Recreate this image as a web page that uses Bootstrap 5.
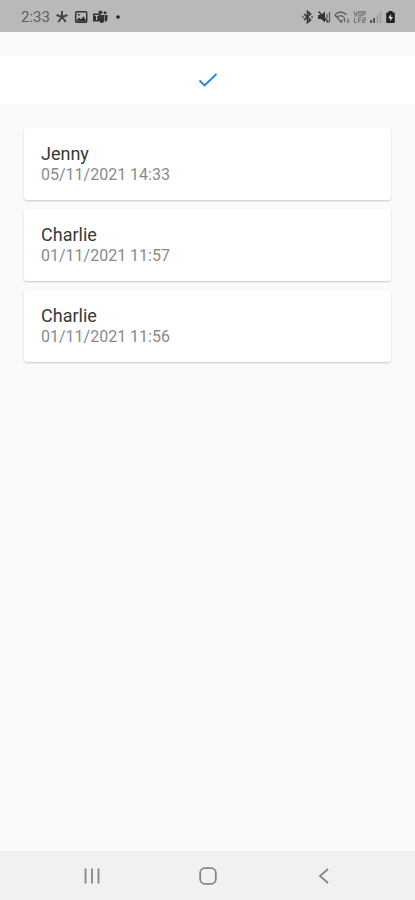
<!DOCTYPE html>
<html lang="en">
<head>
<meta charset="utf-8">
<meta name="viewport" content="width=device-width, initial-scale=1">
<title>Messages</title>
<link href="https://cdn.jsdelivr.net/npm/bootstrap@5.3.0/dist/css/bootstrap.min.css" rel="stylesheet">
<style>
body { background: #fafafa; font-family: Roboto, "Liberation Sans", sans-serif; }
.status-bar { height: 32px; background: #b9b9b9; color: #5e5e5e; font-size: 15px; line-height: 20px; padding: 1px 19px 0 21px; }
.status-bar svg { display: block; }
.status-left { gap: 4px; }
.status-right { gap: 3px; }
.confirm-bar { height: 48px; background: #fff; }
.confirm-btn { color: #2483e0; line-height: 0; }
.entries { gap: 9px; padding: 24px; }
.entry { border: 0; border-radius: 3px; padding: 15px 17px; line-height: 21px; box-shadow: 0 1px 2px rgba(0,0,0,.2); }
.entry-name { font-size: 18px; line-height: 21px; color: #383838; }
.entry-time { font-size: 16px; color: #8a8a8a; }
.system-nav { height: 49px; background: #f1f1f1; padding: 0 34px; color: #858585; }
.system-nav .btn { color: inherit; line-height: 0; }
</style>
</head>
<body class="d-flex flex-column min-vh-100">
<header class="status-bar d-flex align-items-center justify-content-between">
  <div class="status-left d-flex align-items-center">
    <time class="text-nowrap">2:33</time>
    <svg width="16" height="14" viewBox="-1 0 16 14" fill="none" stroke="#444" stroke-width="2" aria-hidden="true"><path d="M7 7V1M7 7l5.500-2M7 7l3.800 5M7 7l-3.800 5M7 7L1.500 5"/></svg>
    <svg width="14" height="14" viewBox="0 0 14 14" aria-hidden="true"><rect x="1.700" y="1.700" width="11" height="10.600" rx="1" fill="none" stroke="#333" stroke-width="1.500"/><path d="M2.500 10.500L5 7.500l2 1.700 2.500-3 2.500 4.300v1H2.500z" fill="#333"/><circle cx="4.800" cy="4.800" r="1" fill="#333"/></svg>
    <svg width="16" height="14" viewBox="0 0 16 14" fill="#333" aria-hidden="true"><circle cx="8.500" cy="2.300" r="1.900"/><circle cx="13" cy="2.800" r="1.500"/><path d="M8 5h4v6.500a3 3 0 0 1-4 1zM12.600 5h2.900v4.500a2 2 0 0 1-2.900 1.700z"/><path d="M1 3.500h7v8H1z"/><path d="M2.600 5.500h4M4.600 5.500v4.500" stroke="#b9b9b9" stroke-width="1.200"/></svg>
    <svg width="12" height="14" viewBox="0 0 12 14" aria-hidden="true"><circle cx="6" cy="7" r="1.800" fill="#222"/></svg>
  </div>
  <div class="status-right d-flex align-items-center">
    <svg width="13" height="14" viewBox="0 0 13 14" fill="none" stroke="#333" stroke-width="1.600" aria-hidden="true"><path d="M3 4l6.500 6L6.500 12.500v-11L9.500 4 3 10"/><path d="M1.500 7h1.200M10.300 7h1.500"/></svg>
    <svg width="14" height="14" viewBox="0 0 14 14" aria-hidden="true"><path d="M1 5h3l4-3.500v11L4 9H1z" fill="#333"/><path d="M1.500 1.500l10 11" stroke="#333" stroke-width="1.500"/><path d="M10 4v5M12.500 2v10" stroke="#555" stroke-width="1.200"/></svg>
    <svg width="16" height="14" viewBox="0 0 16 14" fill="none" stroke="#626262" stroke-width="1.500" aria-hidden="true"><path d="M.8 4.800Q6.500-.5 12.500 4.800M3 7.200q3.500-3 7 0M.8 4.800L7 12l1.500-2"/><path d="M10.500 12V8M9.300 9.200L10.500 8l1.200 1.200M14 8.500v4M12.800 11.300l1.200 1.200 1.200-1.200" stroke-width="1"/></svg>
    <svg width="13" height="14" viewBox="0 0 13 14" fill="none" stroke="#777" stroke-width="1.200" aria-hidden="true"><path d="M1 1.500l1.700 4.500L4.500 1.500M5.700 1.500h2.500V6H5.700zM10 6V1.500h2.200V4H10M1.500 8v4.500H4M5.500 12.500V8h3M5.500 10.300h2.300M9.500 8h2.700v2.200H9.700v2.300h2.700"/></svg>
    <svg width="13" height="14" viewBox="0 0 13 14" aria-hidden="true"><path d="M1 10h2v3H1zM4 8h2v5H4z" fill="#555"/><path d="M7.500 5h1.700v8H7.500zM10.700 2h1.500v11h-1.500z" fill="#999"/></svg>
    <svg width="11" height="14" viewBox="0 0 11 14" aria-hidden="true"><path d="M3.500 1h4v1.500H9a.8.800 0 0 1 .8.800v9a.8.800 0 0 1-.8.800H2a.8.800 0 0 1-.8-.8v-9A.8.800 0 0 1 2 2.500h1.500z" fill="#222"/><path d="M6 4L3.200 8.300h2v3L8 7H6z" fill="#ddd"/></svg>
  </div>
</header>
<main class="flex-grow-1 pt-4">
  <div class="confirm-bar d-flex align-items-center justify-content-center">
    <button type="button" class="btn confirm-btn p-2 border-0" aria-label="Confirm"><svg width="20" height="16" viewBox="0 0 20 16" fill="none" stroke="currentColor" stroke-width="1.800" aria-hidden="true"><path d="M1.500 8.500l5 5L18.500 2"/></svg></button>
  </div>
  <div class="entries d-flex flex-column">
    <article class="card entry"><h2 class="entry-name fw-normal m-0">Jenny</h2><time class="entry-time" datetime="2021-11-05T14:33">05/11/2021 14:33</time></article>
    <article class="card entry"><h2 class="entry-name fw-normal m-0">Charlie</h2><time class="entry-time" datetime="2021-11-01T11:57">01/11/2021 11:57</time></article>
    <article class="card entry"><h2 class="entry-name fw-normal m-0">Charlie</h2><time class="entry-time" datetime="2021-11-01T11:56">01/11/2021 11:56</time></article>
  </div>
</main>
<nav class="system-nav d-flex align-items-center" aria-label="System">
  <button type="button" class="btn border-0 p-2 flex-fill" aria-label="Recent apps"><svg width="18" height="18" viewBox="0 0 18 18" stroke="currentColor" stroke-width="1.800" aria-hidden="true"><path d="M2.500 1.500v15M9 1.500v15M15.500 1.500v15"/></svg></button>
  <button type="button" class="btn border-0 p-2 flex-fill" aria-label="Home"><svg width="18" height="18" viewBox="0 0 18 18" fill="none" stroke="currentColor" stroke-width="1.800" aria-hidden="true"><rect x="1.200" y="1.200" width="15.600" height="15.600" rx="4.500"/></svg></button>
  <button type="button" class="btn border-0 p-2 flex-fill" aria-label="Back"><svg width="18" height="18" viewBox="0 0 18 18" fill="none" stroke="currentColor" stroke-width="1.800" aria-hidden="true"><path d="M14 2L6 9l8 7"/></svg></button>
</nav>
<script src="https://cdn.jsdelivr.net/npm/bootstrap@5.3.0/dist/js/bootstrap.bundle.min.js"></script>
</body>
</html>
